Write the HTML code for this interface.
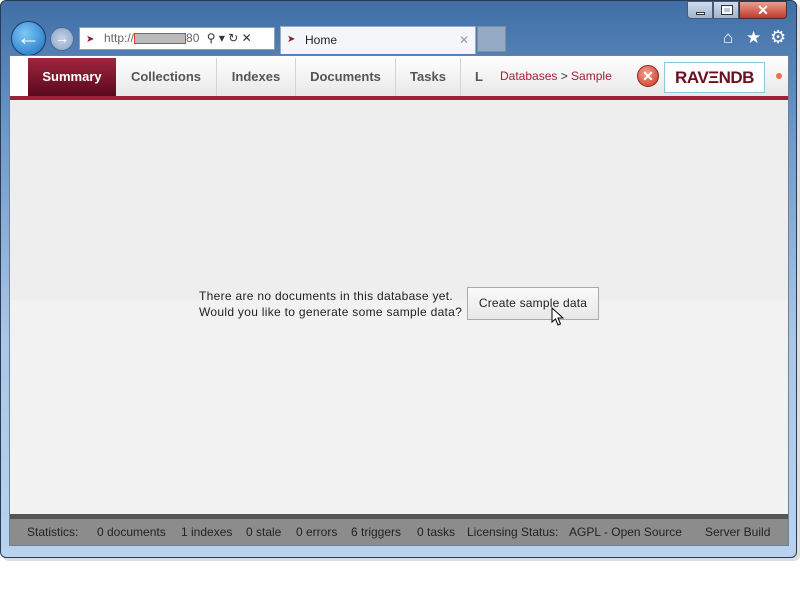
<!DOCTYPE html>
<html><head><style>
*{margin:0;padding:0;box-sizing:border-box}
body{width:800px;height:561px;overflow:hidden;font-family:"Liberation Sans",sans-serif;background:#fff;position:relative}
.frame{position:absolute;left:0;top:0;width:797px;height:558px;border:1px solid #2a3a55;border-radius:6px;background:linear-gradient(180deg,#3f6fa6 0%,#6f9acb 25%,#a9c6e6 60%,#b8d3ef 100%)}
.shadow{position:absolute;left:3px;top:3px;width:797px;height:558px;background:#ddd;border-radius:6px}
.abs{position:absolute}
.content{position:absolute;left:9px;top:55px;width:780px;height:491px;background:#f2f2f2;border:1px solid #6f7f95}
.nav{position:absolute;left:0;top:0;width:778px;height:40px;background:linear-gradient(#fff,#e8e8e8)}
.tab{position:absolute;top:2px;height:38px;font-size:13px;font-weight:bold;color:#555;line-height:38px;text-align:center;border-right:1px solid #d4d4d4}
.st span{position:absolute;top:0}
</style></head><body>
<div class="shadow"></div>
<div class="frame"></div>
<div class="abs" style="left:687px;top:1px;width:26px;height:18px;background:linear-gradient(#cfdcec,#9fb5d0);border:1px solid #4a5a70;border-radius:0 0 0 4px"><div class="abs" style="left:8px;top:10px;width:9px;height:3px;background:#fff;border:1px solid #333"></div></div>
<div class="abs" style="left:713px;top:1px;width:26px;height:18px;background:linear-gradient(#cfdcec,#9fb5d0);border:1px solid #4a5a70"><div class="abs" style="left:8px;top:4px;width:10px;height:8px;border:2px solid #fff;outline:1px solid #333"></div></div>
<div class="abs" style="left:739px;top:1px;width:48px;height:18px;background:linear-gradient(#e8a090,#c0392b);border:1px solid #4a3030;border-radius:0 0 4px 0;color:#fff;font-weight:bold;font-size:14px;text-align:center;line-height:16px">✕</div>
<div class="abs" style="left:11px;top:21px;width:35px;height:35px;border-radius:50%;background:radial-gradient(circle at 40% 35%,#7cc8f5,#1a6cc0);border:1px solid #1a3a6a;color:#fff;font-size:24px;font-weight:bold;text-align:center;line-height:31px">←</div>
<div class="abs" style="left:50px;top:27px;width:24px;height:24px;border-radius:50%;background:radial-gradient(#c4d4e8,#8aa2c2);border:1px solid #4a6a9a;color:#fff;font-size:15px;text-align:center;line-height:22px">→</div>
<div class="abs" style="left:79px;top:27px;width:196px;height:23px;background:#fff;border:1px solid #8aa0bf;font-size:12px;color:#666;line-height:21px;padding-left:24px">http://<span style="display:inline-block;width:52px;height:11px;border:1px solid #e33;background:#bbb;vertical-align:middle"></span>80 <span style="color:#333;margin-left:4px">⚲ ▾ ↻ ✕</span></div>
<div class="abs" style="left:86px;top:34px;color:#8a1a2a;font-size:10px">➤</div>
<div class="abs" style="left:280px;top:26px;width:196px;height:28px;background:#f4f6f9;border:1px solid #9aabc3;border-bottom:none;font-size:12px;color:#222;line-height:26px;padding-left:24px">Home<span style="position:absolute;right:6px;color:#999">✕</span></div>
<div class="abs" style="left:287px;top:34px;color:#8a1a2a;font-size:10px">➤</div>
<div class="abs" style="left:477px;top:26px;width:29px;height:26px;background:#93a9c4;border:1px solid #7d8fa8"></div>
<div class="abs" style="left:723px;top:28px;color:#fff;font-size:17px">⌂</div>
<div class="abs" style="left:746px;top:28px;color:#fff;font-size:17px">★</div>
<div class="abs" style="left:770px;top:27px;color:#fff;font-size:18px">⚙</div>
<div class="content">
 <div class="nav">
  <div class="abs" style="left:0;top:0;width:18px;height:40px;background:#fff"></div>
  <div class="tab" style="left:18px;width:88px;background:linear-gradient(#a0253e,#5a0a1c);color:#fff;border:none">Summary</div>
  <div class="tab" style="left:106px;width:101px">Collections</div>
  <div class="tab" style="left:207px;width:79px">Indexes</div>
  <div class="tab" style="left:286px;width:100px">Documents</div>
  <div class="tab" style="left:386px;width:65px">Tasks</div>
  <div class="tab" style="left:451px;width:36px;border:none">L</div>
  <div class="abs" style="left:490px;top:13px;font-size:12px;color:#a0203c">Databases <span style="color:#333">&gt;</span> Sample</div>
  <div class="abs" style="left:627px;top:9px;width:22px;height:22px;border-radius:50%;background:radial-gradient(circle at 40% 35%,#f5a090,#c8321e);border:1px solid #8a2a1a;color:#fff;font-weight:bold;text-align:center;line-height:20px;font-size:14px">✕</div>
  <div class="abs" style="left:654px;top:6px;width:101px;height:31px;border:1px solid #8cc8dc;background:#fff;font-size:17px;font-weight:bold;color:#6a1020;line-height:30px;text-align:center;letter-spacing:-0.5px">RAVΞNDB</div>
  <div class="abs" style="left:766px;top:17px;width:6px;height:6px;border-radius:50%;background:#e87050"></div>
 </div>
 <div class="abs" style="left:0;top:40px;width:778px;height:4px;background:#a0203c"></div>
 <div class="abs" style="left:0;top:44px;width:778px;height:200px;background:#eeeeee"></div>
 <div class="abs" style="left:189px;top:232px;font-size:12px;color:#222;line-height:16px;letter-spacing:0.3px">There are no documents in this database yet.<br>Would you like to generate some sample data?</div>
 <div class="abs" style="left:457px;top:231px;width:132px;height:33px;border:1px solid #aaa;background:linear-gradient(#fafafa,#e8e8e8);font-size:12px;color:#222;text-align:center;line-height:31px;letter-spacing:0.2px">Create sample data</div>
 <svg class="abs" style="left:541px;top:251px" width="14" height="20"><path d="M1 1 L1 15 L4.5 12 L7 18 L9.5 17 L7 11 L12 11 Z" fill="#fff" stroke="#000" stroke-width="1"/></svg>
 <div class="abs" style="left:0;top:458px;width:778px;height:5px;background:#555"></div>
 <div class="abs st" style="left:0;top:463px;width:778px;height:26px;background:#8c8c8c;font-size:12px;color:#222;line-height:26px;white-space:pre">
  <span style="left:17px">Statistics:</span><span style="left:87px">0 documents</span><span style="left:171px">1 indexes</span><span style="left:236px">0 stale</span><span style="left:286px">0 errors</span><span style="left:341px">6 triggers</span><span style="left:407px">0 tasks</span><span style="left:457px">Licensing Status:</span><span style="left:559px">AGPL - Open Source</span><span style="left:695px">Server Build</span>
 </div>
</div>
</body></html>
